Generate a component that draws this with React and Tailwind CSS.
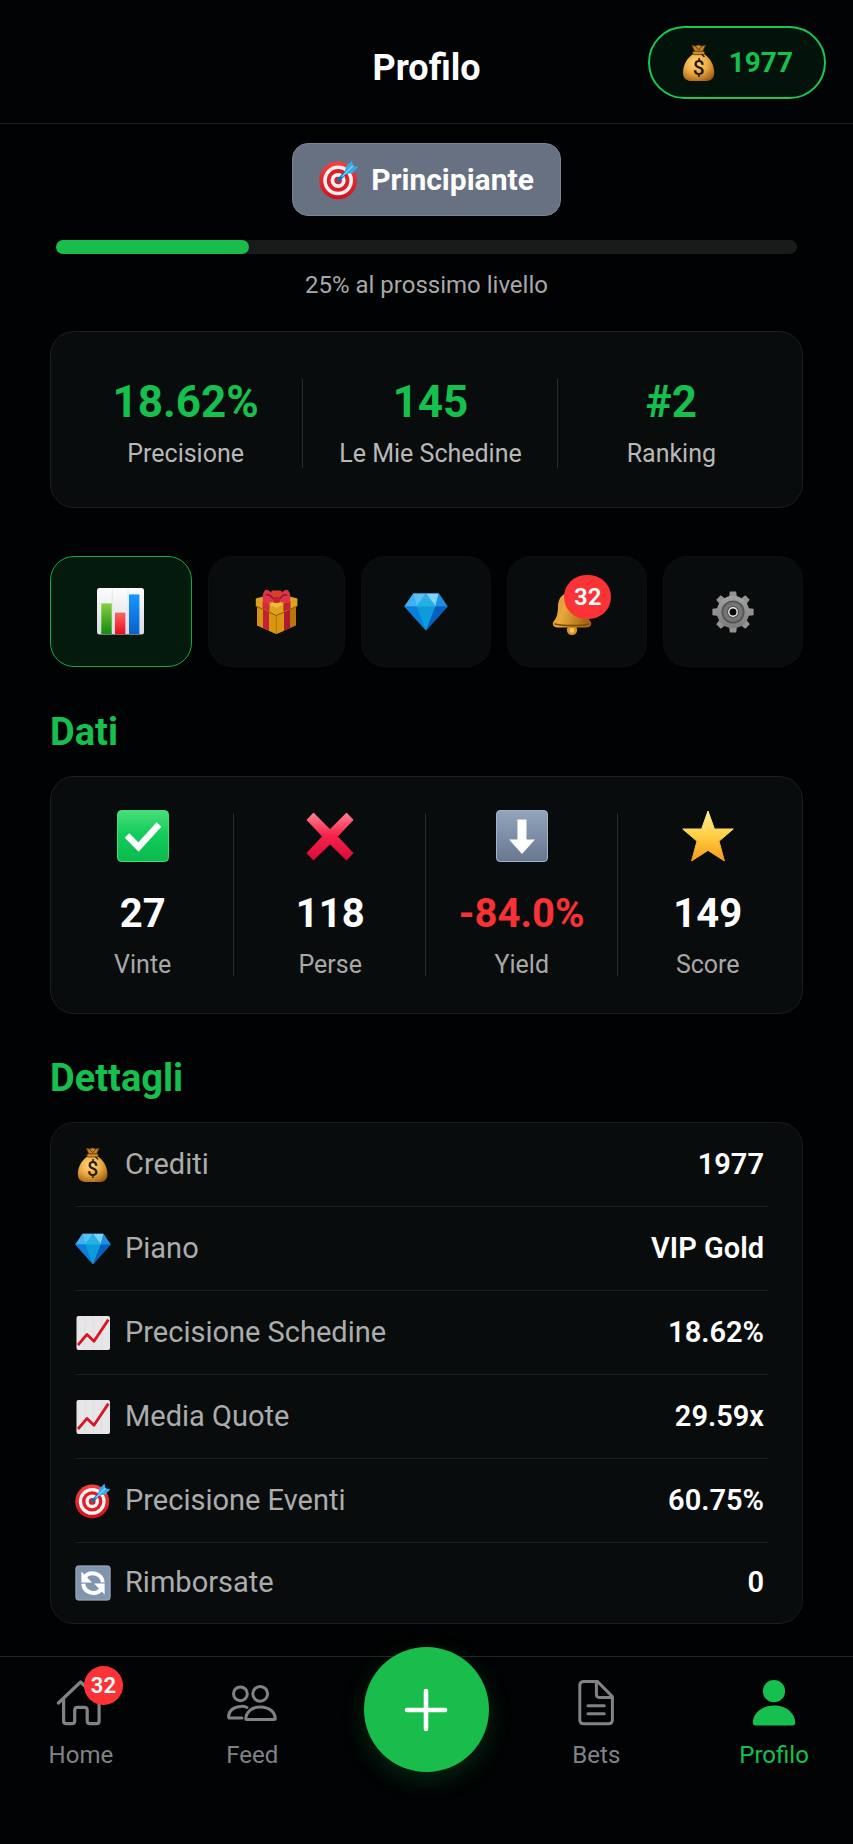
function MoneyBag({ className }) {
  return (
    <svg viewBox="0 0 36 38" className={className} aria-hidden="true">
      <defs>
        <radialGradient id="bag" cx="0.42" cy="0.35" r="0.75">
          <stop offset="0" stopColor="#ffd888" />
          <stop offset="0.5" stopColor="#eeaa41" />
          <stop offset="1" stopColor="#9a5a10" />
        </radialGradient>
      </defs>
      <path d="M11 1.2 14 2.2 17.5 1 21 2.2 24.4 1.2 21.5 7.5H13.8Z" fill="#c98528" stroke="#6d3d0a" strokeWidth="0.8" strokeLinejoin="round" />
      <path d="M14.5 2.6 17.6 6 20.8 2.6" fill="none" stroke="#5b3206" strokeWidth="1" />
      <path d="M13 9.5C6.5 13 2 21 2 28.5 2 34.4 5.2 37 11 37H24.4C30.2 37 33.2 34.4 33.2 28.5 33.2 21 28.7 13 22.2 9.5Z" fill="url(#bag)" />
      <rect x="11.6" y="7.2" width="12" height="3.4" rx="1.7" fill="#d08d2f" stroke="#5b3206" strokeWidth="0.8" />
      <path d="M21 10.5 23 12.6" stroke="#3a2105" strokeWidth="1.4" strokeLinecap="round" />
      <text x="17.6" y="30.8" textAnchor="middle" className="font-[Roboto,sans-serif] text-[21px] font-medium" fill="#2a1804">$</text>
    </svg>
  )
}

function Target({ className }) {
  return (
    <svg viewBox="0 0 36 36" className={className} aria-hidden="true">
      <defs>
        <linearGradient id="targetRed" x1="0" y1="0" x2="0" y2="1">
          <stop offset="0" stopColor="#f4423f" />
          <stop offset="1" stopColor="#d30f1c" />
        </linearGradient>
      </defs>
      <circle cx="17.2" cy="18.4" r="17" fill="url(#targetRed)" />
      <circle cx="17.2" cy="18.4" r="13.4" fill="#fbf3f2" />
      <circle cx="17.2" cy="18.4" r="10.2" fill="#dd1f2a" />
      <circle cx="17.2" cy="18.4" r="6.8" fill="#fbf3f2" />
      <circle cx="17.2" cy="18.4" r="3.4" fill="#dd1f2a" />
      <path d="M17.6 18 27 8.2" stroke="#1272b8" strokeWidth="3" strokeLinecap="round" />
      <path d="M22.5 13 24.2 6 29.6 0.6 30.6 5.2 35.4 6.2 30.2 11.6Z" fill="#34a9ec" />
      <path d="M20.4 15.2 30.6 5.2" stroke="#7fd4ff" strokeWidth="1.2" />
    </svg>
  )
}

function Diamond({ className }) {
  return (
    <svg viewBox="0 0 44 38" className={className} aria-hidden="true">
      <path d="M9.2 0.5H34.8L43.6 13.6 22 37.5 0.4 13.6Z" fill="#0f86dc" />
      <path d="M9.2 0.5 12.6 13.6H0.4Z" fill="#3fb0f2" />
      <path d="M9.2 0.5H22L12.6 13.6Z" fill="#5cc0f5" />
      <path d="M22 0.5H34.8L31.4 13.6Z" fill="#7fd3fa" />
      <path d="M34.8 0.5 43.6 13.6H31.4Z" fill="#1f8fe2" />
      <path d="M22 0.5 31.4 13.6H12.6Z" fill="#35aceb" />
      <path d="M0.4 13.6H12.6L22 37.5Z" fill="#0a7ed8" />
      <path d="M12.6 13.6H31.4L22 37.5Z" fill="#0d9bdd" />
      <path d="M31.4 13.6H43.6L22 37.5Z" fill="#0660bd" />
      <path d="M12.6 13.6C14 5.5 30 5.5 31.4 13.6Z" fill="#22b2e2" />
    </svg>
  )
}

function BarChart({ className }) {
  return (
    <svg viewBox="0 0 47 47" className={className} aria-hidden="true">
      <defs>
        <linearGradient id="paper" x1="0" y1="0" x2="0" y2="1">
          <stop offset="0" stopColor="#fdfdfe" />
          <stop offset="1" stopColor="#d9dae2" />
        </linearGradient>
        <linearGradient id="barGreen" x1="0" y1="0" x2="0" y2="1">
          <stop offset="0" stopColor="#86d040" />
          <stop offset="1" stopColor="#138a0c" />
        </linearGradient>
        <linearGradient id="barRed" x1="0" y1="0" x2="0" y2="1">
          <stop offset="0" stopColor="#ff6562" />
          <stop offset="1" stopColor="#e80e22" />
        </linearGradient>
        <linearGradient id="barBlue" x1="0" y1="0" x2="0" y2="1">
          <stop offset="0" stopColor="#1598ff" />
          <stop offset="1" stopColor="#0a5fcb" />
        </linearGradient>
      </defs>
      <rect width="47" height="46.5" rx="2.5" fill="url(#paper)" />
      <path d="M15.3 1V45M31 1V45" stroke="#e2e2e8" strokeWidth="0.8" />
      <rect x="4.3" y="15.4" width="10.4" height="30.6" fill="url(#barGreen)" />
      <rect x="18" y="24.6" width="10.4" height="21.4" fill="url(#barRed)" />
      <rect x="32" y="6.4" width="10.4" height="39.6" fill="url(#barBlue)" />
    </svg>
  )
}

function Gift({ className }) {
  return (
    <svg viewBox="0 0 43 46" className={className} aria-hidden="true">
      <path d="M2 15 21.4 23V45L2 36.5Z" fill="#d6930f" />
      <path d="M41 15 21.4 23V45L41 36.5Z" fill="#b87708" />
      <path d="M14 21 21.4 24 29 21V41.8L21.4 45 14 41.8Z" fill="#d9960f" />
      <path d="M21.4 23V45" stroke="#a96b06" strokeWidth="0.8" />
      <path d="M8 17.5 14 20V41.6L8 39Z" fill="#c41f35" />
      <path d="M35 17.5 29 20V41.6L35 39Z" fill="#b01a2e" />
      <path d="M0.8 9.5 21.4 4 42.4 9.5V17L21.4 26.5 0.8 17Z" fill="#dfa21c" />
      <path d="M0.8 17 21.4 26.5 42.4 17" fill="none" stroke="#8d5803" strokeWidth="1" />
      <path d="M14.5 15.5 21.4 12.5 28.4 15.5 21.4 19Z" fill="#f0bb38" />
      <path d="M7.5 12 14.5 14.5V22.5L7.5 19.8Z" fill="#d32a40" />
      <path d="M35.5 12 28.4 14.5V22.5L35.5 19.8Z" fill="#c02036" />
      <rect x="16" y="1.6" width="11" height="7" rx="2" fill="#d8402c" />
      <path d="M20 11C17 3 12.5-1 9.8 1.4 7.5 4 7 9 8.4 13.6 12 14.5 17 14 20 11Z" fill="#dd3448" />
      <path d="M23 11C26 3 30.5-1 33.2 1.4 35.5 4 36 9 34.6 13.6 31 14.5 26 14 23 11Z" fill="#dd3448" />
      <path d="M19 10.5C15.5 6 12.5 4.5 11 6.5M24 10.5C27.5 6 30.5 4.5 32 6.5" fill="none" stroke="#8f1226" strokeWidth="1.3" />
      <rect x="18" y="8" width="7" height="6" rx="2" fill="#c3203a" />
    </svg>
  )
}

function Bell({ className }) {
  return (
    <svg viewBox="0 0 50 46" className={className} aria-hidden="true">
      <defs>
        <linearGradient id="bell" x1="0" y1="0" x2="1" y2="0.3">
          <stop offset="0" stopColor="#d9952c" />
          <stop offset="0.4" stopColor="#eaa83c" />
          <stop offset="1" stopColor="#a76812" />
        </linearGradient>
      </defs>
      <circle cx="20" cy="41" r="5.2" fill="#d5912a" />
      <circle cx="20" cy="41.4" r="2.4" fill="#ffc764" />
      <path d="M20 3C12 3 6.3 8 6 17 5.8 25 5 28.5 1.5 32.5-0.5 36.5 2 38.5 6 38.5H34C38 38.5 40.5 36.5 38.5 32.5 35 28.5 34.2 25 34 17 33.7 8 28 3 20 3Z" fill="url(#bell)" />
      <path d="M3 35C12 37.2 28 37.2 37 35" fill="none" stroke="#7d4a08" strokeWidth="1.6" strokeLinecap="round" />
    </svg>
  )
}

const teeth = [0, 45, 90, 135, 180, 225, 270, 315]

function Gear({ className }) {
  return (
    <svg viewBox="0 0 42 42" className={className} aria-hidden="true">
      <defs>
        <linearGradient id="gear" x1="0" y1="0" x2="0" y2="1">
          <stop offset="0" stopColor="#a3a3a3" />
          <stop offset="1" stopColor="#7c7c7c" />
        </linearGradient>
      </defs>
      {teeth.map((angle) => (
        <path key={angle} d="M17.8 0.4H24.2L25 7H17Z" fill="#929292" transform={`rotate(${angle} 21 21)`} />
      ))}
      <circle cx="21" cy="21" r="16.2" fill="url(#gear)" />
      <circle cx="21" cy="21" r="11.6" fill="#555" />
      <circle cx="21" cy="21" r="9.8" fill="#757575" />
      <circle cx="21" cy="21" r="6" fill="#505050" />
      <circle cx="21" cy="21" r="4.2" fill="#060808" stroke="#ececec" strokeWidth="1.4" />
    </svg>
  )
}

function CheckTile({ className }) {
  return (
    <svg viewBox="0 0 52 52" className={className} aria-hidden="true">
      <defs>
        <linearGradient id="check" x1="0" y1="0" x2="0" y2="1">
          <stop offset="0" stopColor="#4ade78" />
          <stop offset="0.45" stopColor="#12cd5c" />
          <stop offset="1" stopColor="#0cb84e" />
        </linearGradient>
      </defs>
      <rect x="0.5" y="0.5" width="51" height="51" rx="4" fill="url(#check)" stroke="#3fe07c" />
      <path d="M10 25.5 21.5 37 42 14.5" fill="none" stroke="#fff" strokeWidth="6.4" />
    </svg>
  )
}

function Cross({ className }) {
  return (
    <svg viewBox="0 0 52 52" className={className} aria-hidden="true">
      <defs>
        <linearGradient id="cross" x1="0" y1="0" x2="0" y2="1">
          <stop offset="0" stopColor="#ff7f90" />
          <stop offset="0.45" stopColor="#f7264c" />
          <stop offset="1" stopColor="#dc0a3a" />
        </linearGradient>
      </defs>
      <path d="M9.5 3.5 26 20 42.5 3.5 48.8 9.8 33 26.5 48.8 43.2 42.5 49.5 26 33.5 9.5 49.5 3.2 43.2 19 26.5 3.2 9.8Z" fill="url(#cross)" stroke="url(#cross)" strokeWidth="1.2" strokeLinejoin="round" />
    </svg>
  )
}

function DownTile({ className }) {
  return (
    <svg viewBox="0 0 52 52" className={className} aria-hidden="true">
      <defs>
        <linearGradient id="slate" x1="0" y1="0" x2="0" y2="1">
          <stop offset="0" stopColor="#93a5bc" />
          <stop offset="1" stopColor="#66778f" />
        </linearGradient>
      </defs>
      <rect x="0.5" y="0.5" width="51" height="51" rx="3.5" fill="url(#slate)" stroke="#a3b3c6" />
      <path d="M21.5 9.5H30.5V29.5H39L26 44 13 29.5H21.5Z" fill="#fff" />
    </svg>
  )
}

function Star({ className }) {
  return (
    <svg viewBox="0 0 52 52" className={className} aria-hidden="true">
      <defs>
        <linearGradient id="star" x1="0" y1="0" x2="0" y2="1">
          <stop offset="0" stopColor="#fff09a" />
          <stop offset="0.5" stopColor="#ffce43" />
          <stop offset="1" stopColor="#f59a1b" />
        </linearGradient>
      </defs>
      <path d="M26 1 32.4 19H51.3L37 31.2 42.4 51 26 40.4 9.6 51 15 31.2 0.7 19H19.6Z" fill="url(#star)" stroke="url(#star)" strokeLinejoin="round" />
    </svg>
  )
}

function TrendTile({ className }) {
  return (
    <svg viewBox="0 0 36 36" className={className} aria-hidden="true">
      <rect x="1.5" y="1" width="33.5" height="34" rx="2" fill="#e6e6e8" />
      <path d="M9.8 1V35M18.2 1V35M26.6 1V35" stroke="#dcdce0" strokeWidth="0.8" />
      <path d="M3 30 12 19.4 19 26.2 33.4 4.6" fill="none" stroke="#d91626" strokeWidth="2.8" strokeLinejoin="round" />
    </svg>
  )
}

function RefreshTile({ className }) {
  return (
    <svg viewBox="0 0 36 36" className={className} aria-hidden="true">
      <rect x="0.9" y="0.9" width="34.2" height="34.2" rx="2.4" fill="#8095ae" stroke="#9fb0c3" />
      <path d="M9.4 12.6C11.8 9 16 7.6 20.2 8.6 24.4 9.6 27.4 13 27.8 17.4" fill="none" stroke="#fff" strokeWidth="4" />
      <path d="M6.4 6.6V17.6H17Z" fill="#fff" />
      <path d="M26.6 23.6C24.2 27.2 20 28.6 15.8 27.6 11.6 26.6 8.6 23.2 8.2 18.8" fill="none" stroke="#fff" strokeWidth="4" />
      <path d="M29.6 29.6V18.6H19Z" fill="#fff" />
    </svg>
  )
}

function HomeIcon() {
  return (
    <svg viewBox="0 0 50 46" className="h-[46px] w-[50px]" fill="none" stroke="currentColor" strokeWidth="3.2" strokeLinecap="round" strokeLinejoin="round" aria-hidden="true">
      <path d="M2.4 23 24.6 2 47 23" />
      <path d="M7.6 19.5V41Q7.6 43.7 10.3 43.7H16Q18.7 43.7 18.7 41V30.2Q18.7 27.4 21.5 27.4H28.4Q31.2 27.4 31.2 30.2V41Q31.2 43.7 33.9 43.7H40.4Q43.1 43.7 43.1 41V19.5" />
    </svg>
  )
}

function FeedIcon() {
  return (
    <svg viewBox="0 0 50 46" className="h-[46px] w-[50px]" fill="none" stroke="currentColor" strokeWidth="3" strokeLinecap="round" strokeLinejoin="round" aria-hidden="true">
      <circle cx="13.4" cy="13.8" r="6.9" />
      <circle cx="33.2" cy="13.8" r="7.4" />
      <path d="M20 27.5C18 26.6 15.8 26.2 13.6 26.4 6.6 26.8 1.6 31 1.6 36.4Q1.6 38 3 38H15" />
      <path d="M18.8 39.3C18.8 32 25 26.9 33.4 26.9 41.8 26.9 48.2 32 48.2 38.6Q48.2 39.6 47 39.6H20Q18.8 39.6 18.8 38.6Z" />
    </svg>
  )
}

function BetsIcon() {
  return (
    <svg viewBox="0 0 50 46" className="h-[46px] w-[50px]" fill="none" stroke="currentColor" strokeWidth="3" strokeLinecap="round" strokeLinejoin="round" aria-hidden="true">
      <path d="M26.6 1.6H12.8Q8.8 1.6 8.8 5.6V39.8Q8.8 43.8 12.8 43.8H37.4Q41.4 43.8 41.4 39.8V16.6Z" />
      <path d="M25.4 2V14.6Q25.4 17.4 28.2 17.4H41" />
      <path d="M17 25.8H33.2M17 33.8H33.2" />
    </svg>
  )
}

function ProfileIcon() {
  return (
    <svg viewBox="0 0 50 46" className="h-[46px] w-[50px]" fill="currentColor" aria-hidden="true">
      <circle cx="25" cy="11.2" r="11.1" />
      <path d="M3.8 43C3.8 33 13 25.6 25 25.6S46.2 33 46.2 43Q46.2 45.4 43.8 45.4H6.2Q3.8 45.4 3.8 43Z" />
    </svg>
  )
}

const summary = [
  { value: '18.62%', label: 'Precisione' },
  { value: '145', label: 'Le Mie Schedine' },
  { value: '#2', label: 'Ranking' },
]

const tabs = [
  { name: 'Dati', icon: <BarChart className="size-[47px]" />, active: true },
  { name: 'Premi', icon: <Gift className="h-[46px] w-[43px]" /> },
  { name: 'Piano', icon: <Diamond className="h-[38px] w-[44px]" /> },
  { name: 'Notifiche', icon: <Bell className="h-[46px] w-[50px]" />, badge: 32 },
  { name: 'Impostazioni', icon: <Gear className="size-[42px]" /> },
]

const stats = [
  { Icon: CheckTile, value: '27', label: 'Vinte' },
  { Icon: Cross, value: '118', label: 'Perse' },
  { Icon: DownTile, value: '-84.0%', label: 'Yield', negative: true },
  { Icon: Star, value: '149', label: 'Score' },
]

const details = [
  { Icon: MoneyBag, label: 'Crediti', value: '1977' },
  { Icon: Diamond, label: 'Piano', value: 'VIP Gold' },
  { Icon: TrendTile, label: 'Precisione Schedine', value: '18.62%' },
  { Icon: TrendTile, label: 'Media Quote', value: '29.59x' },
  { Icon: Target, label: 'Precisione Eventi', value: '60.75%' },
  { Icon: RefreshTile, label: 'Rimborsate', value: '0' },
]

function NavItem({ label, badge, active, children }) {
  return (
    <a href="#" className={`flex flex-col items-center ${active ? 'text-[#16c04e]' : 'text-[#828286]'}`}>
      <span className="relative">
        {children}
        {badge && (
          <span className="absolute -top-3.5 left-7 flex size-[39px] items-center justify-center rounded-full bg-[#fb3236] text-[22px] font-semibold text-white">
            {badge}
          </span>
        )}
      </span>
      <span className="mt-[15px] text-2xl leading-7">{label}</span>
    </a>
  )
}

export default function App() {
  return (
    <div className="flex min-h-screen flex-col bg-[#010203] font-[Roboto,sans-serif] text-white">
      <header className="grid h-[124px] grid-cols-[1fr_auto_1fr] items-center border-b border-[#1b1c20] bg-[#010304] px-[27px] pt-0.5">
        <h1 className="col-start-2 pt-2.5 text-4xl leading-10 font-bold">Profilo</h1>
        <button className="flex h-[73px] items-center gap-3 justify-self-end rounded-full border-2 border-[#1bc653] bg-[#03120a] px-[31px] text-[28px] font-bold text-[#16c04e]">
          <MoneyBag className="h-[38px] w-9" />
          1977
        </button>
      </header>

      <main className="px-[50px]">
        <div className="mt-[19px] flex justify-center">
          <div className="flex h-[73px] items-center gap-3 rounded-2xl border border-[#7b8494] bg-[#687182] px-[26px] text-[30px] font-bold">
            <Target className="size-10" />
            Principiante
          </div>
        </div>
        <div className="mx-1.5 mt-6 h-3.5 rounded-full bg-[#191b1b]" role="progressbar" aria-valuenow={25} aria-label="Livello">
          <div className="h-full w-[26%] rounded-full bg-[#18bd4b]" />
        </div>
        <p className="mt-[15px] text-center text-2xl leading-8 text-[#a8a8a8]">25% al prossimo livello</p>

        <section className="mt-[30px] grid grid-cols-[235fr_254fr_227fr] rounded-3xl border border-[#1c1f1f] bg-[#090c0c] px-[17px] pt-[47px] pb-[39px]">
          {summary.map((s, i) => (
            <div key={s.label} className="relative text-center">
              <div className="text-[44px] leading-[46px] font-bold text-[#16c04e]">{s.value}</div>
              <div className="mt-[15px] text-[25px] leading-7 text-[#b8b8b8]">{s.label}</div>
              {i < summary.length - 1 && <span className="absolute inset-y-0 right-0 w-px bg-[#2b2d2d]" />}
            </div>
          ))}
        </section>

        <div className="mt-12 mb-[45px] grid h-[111px] grid-cols-[142fr_137fr_131fr_140fr_140fr] gap-4">
          {tabs.map((t) => (
            <button
              key={t.name}
              aria-label={t.name}
              className={`flex items-center justify-center rounded-3xl border ${
                t.active ? 'border-[#17a846] bg-[#041a0d]' : 'border-[#0d1010] bg-[#090c0c]'
              }`}
            >
              <span className="relative">
                {t.icon}
                {t.badge && (
                  <span className="absolute -top-3.5 left-3 flex h-11 w-[47px] items-center justify-center rounded-full bg-[#fb3236] text-2xl font-semibold">
                    {t.badge}
                  </span>
                )}
              </span>
            </button>
          ))}
        </div>

        <h2 className="mb-6 text-[38px] leading-10 font-bold text-[#16c04e]">Dati</h2>
        <section className="grid grid-cols-[183fr_191fr_191fr_180fr] rounded-3xl border border-[#1c1f1f] bg-[#090c0c] pt-[33px] pr-1 pb-[34px]">
          {stats.map(({ Icon, value, label, negative }, i) => (
            <div key={label} className="relative flex flex-col items-center">
              <Icon className="size-[52px]" />
              <div className={`mt-[30px] text-[40px] leading-11 font-bold ${negative ? 'text-[#f83234]' : ''}`}>{value}</div>
              <div className="mt-[15px] text-[25px] leading-7 text-[#a8a8a8]">{label}</div>
              {i < stats.length - 1 && <span className="absolute inset-y-[3px] right-0 w-px bg-[#2b2d2d]" />}
            </div>
          ))}
        </section>

        <h2 className="mt-11 mb-6 text-[38px] leading-10 font-bold text-[#16c04e]">Dettagli</h2>
        <dl className="rounded-3xl border border-[#191c1c] bg-[#090c0c] pr-[34px] pl-6">
          {details.map(({ Icon, label, value }) => (
            <div key={label} className="flex h-[84px] items-center justify-between border-b border-[#1b1e1e] pr-1 text-[29px] last:h-20 last:border-b-0">
              <dt className="flex items-center gap-3.5 text-[#acacac]">
                <Icon className="size-9" />
                {label}
              </dt>
              <dd className="font-semibold">{value}</dd>
            </div>
          ))}
        </dl>
      </main>

      <nav className="mt-8 grid flex-1 grid-cols-[138fr_205fr_143fr_198fr_158fr] items-start border-t border-[#232526] bg-[#010304] pt-[23px] pb-[75px] pl-3">
        <NavItem label="Home" badge={32}><HomeIcon /></NavItem>
        <NavItem label="Feed"><FeedIcon /></NavItem>
        <button aria-label="Nuova schedina" className="-mt-[33px] -mb-10 flex size-[125px] items-center justify-center justify-self-center rounded-full bg-[#18bd4b] shadow-[0_8px_24px_rgba(24,189,75,0.2)]">
          <svg viewBox="0 0 44 44" className="size-11" stroke="#fff" strokeWidth="4.6" strokeLinecap="round" aria-hidden="true">
            <path d="M22 3V41M3 22H41" />
          </svg>
        </button>
        <NavItem label="Bets"><BetsIcon /></NavItem>
        <NavItem label="Profilo" active><ProfileIcon /></NavItem>
      </nav>
    </div>
  )
}
